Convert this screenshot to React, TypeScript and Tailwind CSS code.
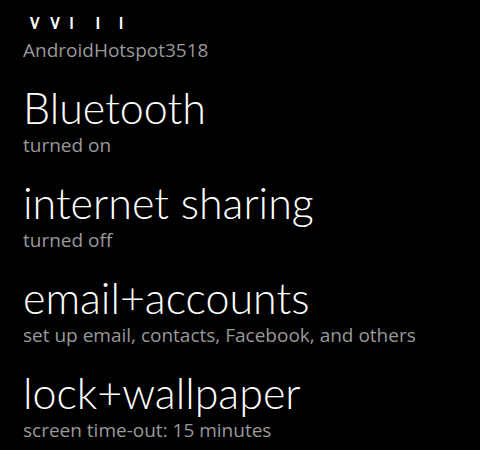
const items = [
  { title: "Wi-Fi", detail: "AndroidHotspot3518" },
  { title: "Bluetooth", detail: "turned on" },
  { title: "internet sharing", detail: "turned off" },
  { title: "email+accounts", detail: "set up email, contacts, Facebook, and others" },
  { title: "lock+wallpaper", detail: "screen time-out: 15 minutes" },
];

export default function App() {
  return (
    <div className="flex h-[450px] w-[480px] flex-col bg-black">
      {/* scroll viewer clips the list below the header edge */}
      <div className="h-[17px] shrink-0 bg-black" />
      <div className="flex-1 overflow-hidden">
        <ul className="-mt-[29px] pl-[23px]">
          {items.map((item) => (
            <li key={item.title} className="h-[95px]">
              <div className="whitespace-nowrap font-['Lato',sans-serif] text-[43px] font-light leading-[50px] text-white">
                {item.title}
              </div>
              <div className="whitespace-nowrap font-['Open_Sans',sans-serif] text-[19px] leading-[24px] text-[#999999]">
                {item.detail}
              </div>
            </li>
          ))}
        </ul>
      </div>
    </div>
  );
}
